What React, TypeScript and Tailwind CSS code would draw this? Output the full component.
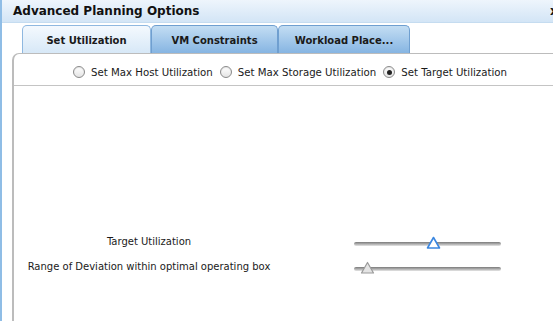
import React from "react";

const font = { fontFamily: '"DejaVu Sans", Verdana, sans-serif' };

function Radio({ checked, label }: { checked?: boolean; label: string }) {
  return (
    <div className="flex items-center gap-[6px]">
      <div className="w-[12px] h-[12px] rounded-full border border-[#8a8a8a] bg-gradient-to-b from-[#ffffff] to-[#e4e4e4] flex items-center justify-center shadow-[inset_0_1px_1px_rgba(0,0,0,0.1)]">
        {checked && <div className="w-[5px] h-[5px] rounded-full bg-[#222]" />}
      </div>
      <span>{label}</span>
    </div>
  );
}

function Slider({ pos, active }: { pos: number; active?: boolean }) {
  return (
    <div className="relative w-[147px] h-[12px] mt-[4px]">
      <div className="absolute left-0 right-0 top-[4px] h-[4px] rounded-full bg-gradient-to-b from-[#7a7a7a] to-[#c8c8c8] border-b border-[#d8d8d8]" />
      <svg
        className="absolute top-[-2px]"
        style={{ left: pos - 7 }}
        width="15"
        height="14"
        viewBox="0 0 15 14"
      >
        {active ? (
          <path d="M7.5 1.5 L13.5 12 L1.5 12 Z" fill="#ffffff" stroke="#3b87e0" strokeWidth="1.6" strokeLinejoin="round" />
        ) : (
          <path d="M7.5 1.5 L13.5 12 L1.5 12 Z" fill="#e4e4e4" stroke="#9a9a9a" strokeWidth="1.2" strokeLinejoin="round" />
        )}
      </svg>
    </div>
  );
}

export default function App() {
  return (
    <div className="w-[553px] h-[321px] overflow-hidden bg-white text-[#1a1a1a]" style={font}>
      <div className="h-full border-l-2 border-[#8fbde6] flex flex-col">
        <div className="h-[23px] bg-gradient-to-b from-[#eef5fc] to-[#d3e5f6] border-b border-[#c5dcf0] flex items-center pl-[11px] justify-between overflow-hidden">
          <span className="text-[12px] font-bold text-[#111]">Advanced Planning Options</span>
          <span className="text-[12px] font-bold text-[#111] w-[3px] overflow-hidden">x</span>
        </div>
        <div className="flex pl-[20px] pt-[2px] h-[30px] items-end">
          <div className="w-[129px] h-[28px] pt-[2px] rounded-t-[5px] border border-b-0 border-[#8fb8e0] bg-gradient-to-b from-[#f4f9fe] to-[#d7e8f7] flex items-center justify-center text-[10px] font-bold text-[#1a1a1a]">
            Set Utilization
          </div>
          <div className="w-[127px] h-[28px] pt-[2px] rounded-t-[5px] border border-b-0 border-[#6f9fd0] bg-gradient-to-b from-[#c3ddf3] to-[#86b5e2] flex items-center justify-center text-[10px] font-bold text-[#1a1a1a]">
            VM Constraints
          </div>
          <div className="w-[132px] h-[28px] pt-[2px] rounded-t-[5px] border border-b-0 border-[#6f9fd0] bg-gradient-to-b from-[#c3ddf3] to-[#86b5e2] flex items-center justify-center text-[10px] font-bold text-[#1a1a1a]">
            Workload Place...
          </div>
        </div>
        <div className="ml-[10px] flex-1 border-t border-l-2 border-[#bcbcbc] rounded-tl-[7px] flex flex-col">
          <div className="h-[32px] pt-[6px] border-b border-[#c4c4c4] flex items-center pl-[59px] gap-[7px] text-[10.2px] text-[#1a1a1a]">
            <Radio label="Set Max Host Utilization" />
            <Radio label="Set Max Storage Utilization" />
            <Radio checked label="Set Target Utilization" />
          </div>
          <div className="flex flex-col pt-[149px] gap-[12px] text-[10px] text-[#1a1a1a]">
            <div className="flex items-center h-[13px]">
              <div className="w-[270px] text-center">Target Utilization</div>
              <div className="ml-[70px]">
                <Slider pos={79} active />
              </div>
            </div>
            <div className="flex items-center h-[13px]">
              <div className="w-[270px] text-center">Range of Deviation within optimal operating box</div>
              <div className="ml-[70px]">
                <Slider pos={13} />
              </div>
            </div>
          </div>
        </div>
      </div>
    </div>
  );
}
